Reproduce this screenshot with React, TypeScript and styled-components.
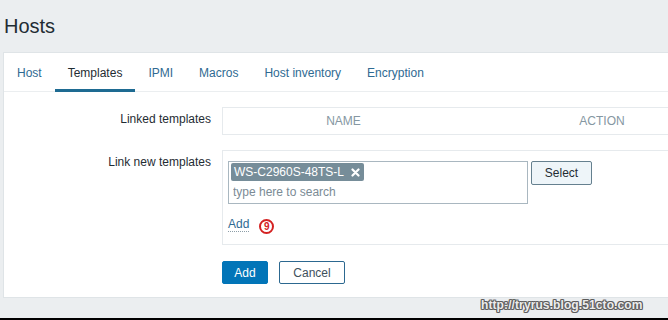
import React from "react";
import styled, { createGlobalStyle } from "styled-components";

const Global = createGlobalStyle`
  html, body {
    margin: 0;
    padding: 0;
    width: 668px;
    height: 320px;
    overflow: hidden;
    background: #ebeef0;
    font-family: "Liberation Sans", Arial, sans-serif;
    font-size: 12px;
    color: #1f2c33;
  }
  * { box-sizing: border-box; }
`;

const Page = styled.div`
  position: relative;
  display: flex;
  flex-direction: column;
  width: 668px;
  height: 320px;
  overflow: hidden;
`;

const Header = styled.h1`
  margin: 0;
  height: 52px;
  padding: 14px 0 0 4px;
  font-size: 20px;
  line-height: 24px;
  font-weight: normal;
  color: #1f2c33;
`;

const Panel = styled.div`
  margin-left: 3px;
  height: 246px;
  background: #fff;
  border: 1px solid #dfe4e7;
  border-right: none;
  overflow: hidden;
`;

const TabList = styled.ul`
  display: flex;
  margin: 0;
  padding: 0;
  list-style: none;
  border-bottom: 1px solid #ebeef0;
  height: 39px;
`;

const Tab = styled.li<{ $active?: boolean }>`
  height: 39px;
  margin-bottom: -1px;
  padding: 13px 13px 9px;
  line-height: 14px;
  white-space: nowrap;
  color: ${(p) => (p.$active ? "#1f2c33" : "#2f6a92")};
  border-bottom: 3px solid ${(p) => (p.$active ? "#1e6b92" : "transparent")};
`;

const Form = styled.div`
  display: grid;
  grid-template-columns: 207px minmax(0, 1fr);
  column-gap: 11px;
  row-gap: 15px;
  padding: 15px 0 15px;
`;

const Label = styled.div`
  padding-top: 5px;
  line-height: 14px;
  text-align: right;
  white-space: nowrap;
`;

const Box = styled.div`
  width: 530px;
  border: 1px solid #e6eaed;
`;

const LinkedTable = styled.table`
  border-collapse: collapse;
  table-layout: fixed;
  width: 517px;
`;

const HeadCell = styled.th<{ $w: number }>`
  width: ${(p) => p.$w}px;
  height: 26px;
  padding: 0;
  font-weight: normal;
  font-size: 12px;
  line-height: 14px;
  text-transform: uppercase;
  text-align: center;
  color: #8597a2;
`;

const NewBox = styled(Box)`
  padding: 10px 5px 10px;
`;

const SelectRow = styled.div`
  display: flex;
  align-items: flex-start;
  gap: 3px;
`;

const MultiSelect = styled.div`
  width: 300px;
  border: 1px solid #a9b7c0;
  padding: 1px 2px;
`;

const Tag = styled.span`
  display: inline-flex;
  align-items: center;
  gap: 7px;
  height: 18px;
  margin-bottom: 1px;
  padding: 0 4px 0 3px;
  border-radius: 2px;
  background: #768d99;
  color: #fff;
  line-height: 18px;
`;

const TagClose = styled.svg`
  display: block;
`;

const SearchInput = styled.input`
  display: block;
  width: 100%;
  height: 20px;
  padding: 0 2px;
  border: none;
  outline: none;
  background: transparent;
  font-family: inherit;
  font-size: 12px;
  color: #1f2c33;
  &::placeholder {
    color: #7b8b95;
    opacity: 1;
  }
`;

const GreyButton = styled.button`
  width: 61px;
  height: 24px;
  padding: 0;
  border: 1px solid #65808f;
  border-radius: 2px;
  background: #eef5f9;
  font-family: inherit;
  font-size: 12px;
  color: #1f2c33;
`;

const AddRow = styled.div`
  display: flex;
  align-items: flex-start;
  gap: 10px;
  margin-top: 13px;
`;

const AddLink = styled.span`
  display: inline-block;
  line-height: 14px;
  color: #2f6a92;
  border-bottom: 1px dotted #8d9ea8;
`;

const Annotation = styled.span`
  display: inline-flex;
  align-items: center;
  justify-content: center;
  width: 15px;
  height: 15px;
  margin-top: 2px;
  border: 2px solid #d42222;
  border-radius: 50%;
  color: #d42222;
  font-size: 10px;
  font-weight: bold;
  line-height: 1;
`;

const ButtonRow = styled.div`
  grid-column: 2;
  display: flex;
  gap: 11px;
  margin-top: 1px;
`;

const Button = styled.button<{ $primary?: boolean }>`
  height: 23px;
  width: ${(p) => (p.$primary ? "46px" : "66px")};
  padding: 0;
  border-radius: 2px;
  border: 1px solid ${(p) => (p.$primary ? "#0275b8" : "#2c6890")};
  background: ${(p) => (p.$primary ? "#0275b8" : "#fff")};
  color: ${(p) => (p.$primary ? "#fff" : "#3e505c")};
  font-family: inherit;
  font-size: 12px;
`;

const Spacer = styled.div`
  flex: 1;
`;

const BottomEdge = styled.div`
  height: 2px;
  background: #000;
`;

const Watermark = styled.div`
  position: absolute;
  left: 481px;
  top: 298px;
  font-family: "Liberation Sans", Arial, sans-serif;
  font-weight: bold;
  font-size: 12px;
  letter-spacing: 0.1px;
  line-height: 15px;
  white-space: nowrap;
  color: #ececec;
  text-shadow: -1px 0 #5a5a5a, 1px 0 #5a5a5a, 0 -1px #5a5a5a, 0 1px #5a5a5a,
    -1px -1px #777, 1px 1px #777, -1px 1px #777, 1px -1px #777;
`;

const tabs = ["Host", "Templates", "IPMI", "Macros", "Host inventory", "Encryption"];

export default function App() {
  return (
    <Page>
      <Global />
      <Header>Hosts</Header>
      <Panel>
        <TabList>
          {tabs.map((t) => (
            <Tab key={t} $active={t === "Templates"}>
              {t}
            </Tab>
          ))}
        </TabList>
        <Form>
          <Label>Linked templates</Label>
          <Box>
            <LinkedTable>
              <thead>
                <tr>
                  <HeadCell $w={241}>Name</HeadCell>
                  <HeadCell $w={276}>Action</HeadCell>
                </tr>
              </thead>
            </LinkedTable>
          </Box>

          <Label>Link new templates</Label>
          <NewBox>
            <SelectRow>
              <MultiSelect>
                <Tag>
                  WS-C2960S-48TS-L
                  <TagClose width="9" height="9" viewBox="0 0 9 9">
                    <path d="M1.5 1.5 L7.5 7.5 M7.5 1.5 L1.5 7.5" stroke="#fff" strokeWidth="2.2" strokeLinecap="round" />
                  </TagClose>
                </Tag>
                <SearchInput placeholder="type here to search" readOnly />
              </MultiSelect>
              <GreyButton>Select</GreyButton>
            </SelectRow>
            <AddRow>
              <AddLink>Add</AddLink>
              <Annotation>9</Annotation>
            </AddRow>
          </NewBox>

          <ButtonRow>
            <Button $primary>Add</Button>
            <Button>Cancel</Button>
          </ButtonRow>
        </Form>
      </Panel>
      <Spacer />
      <BottomEdge />
      <Watermark>http://tryrus.blog.51cto.com</Watermark>
    </Page>
  );
}
